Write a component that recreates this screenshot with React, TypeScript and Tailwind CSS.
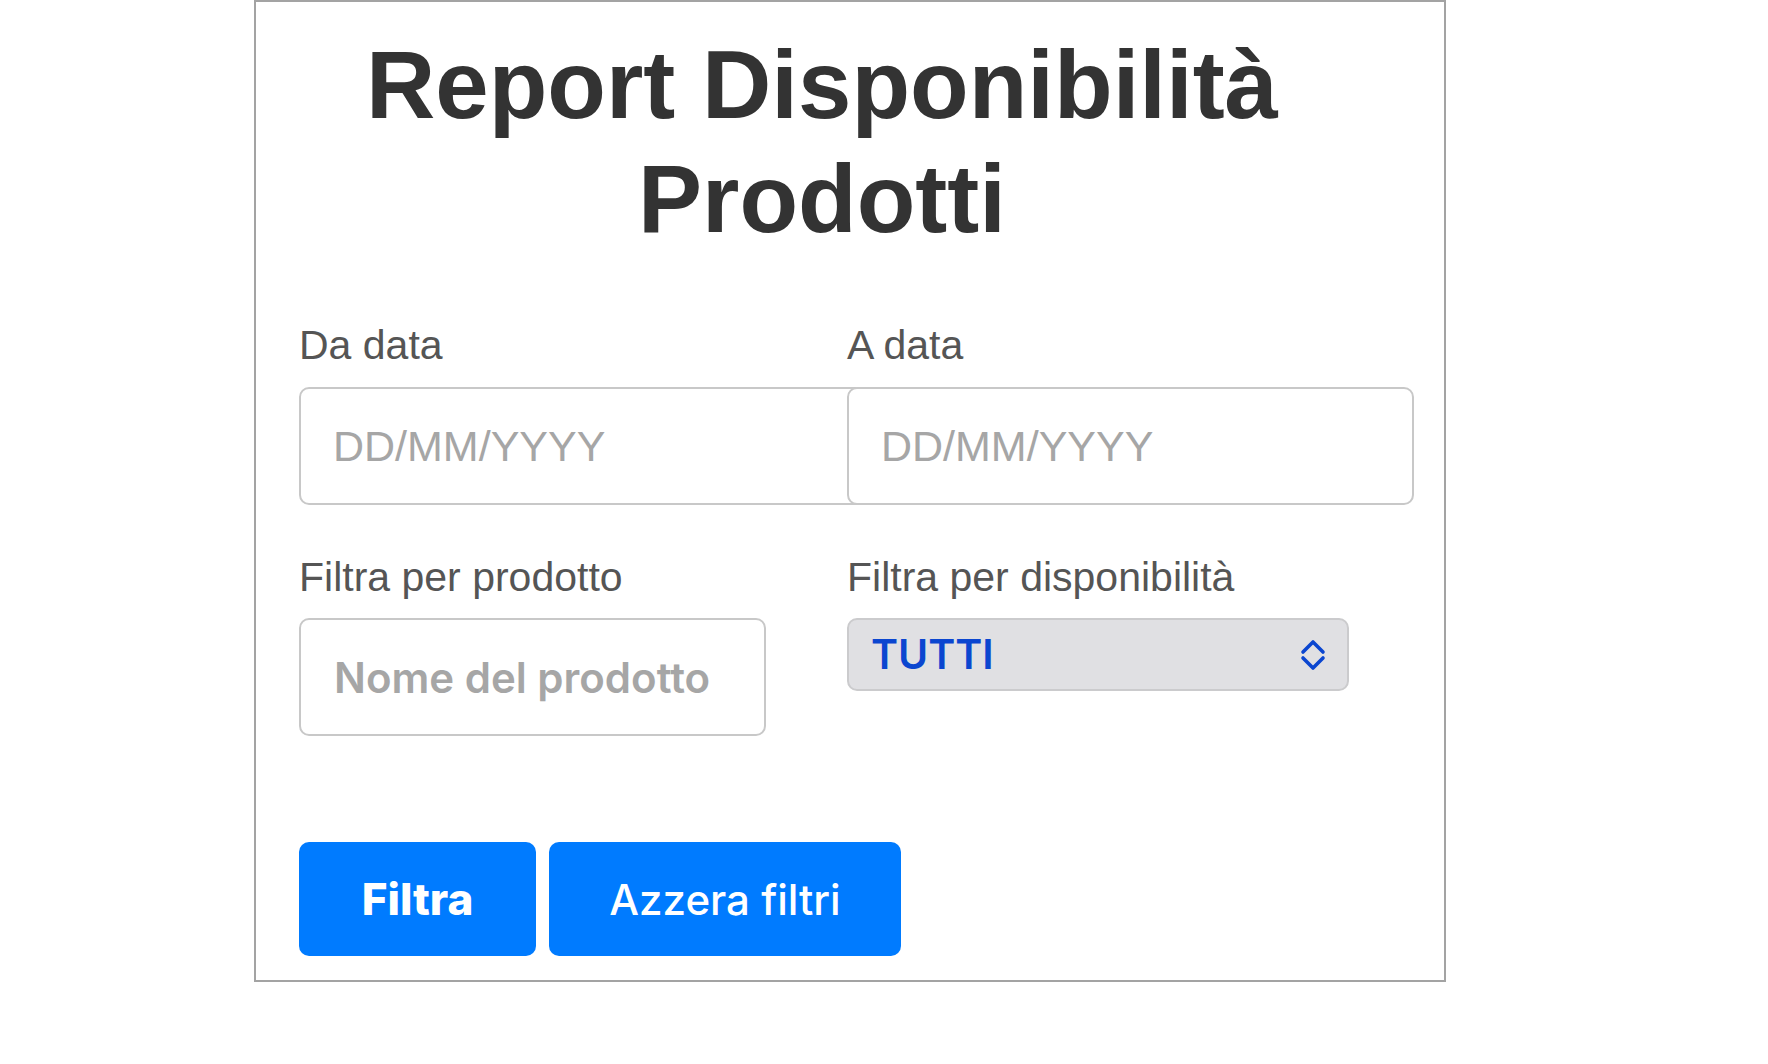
import { useState } from "react";

const ChevronUpDown = () => (
    <svg width="28" height="32" viewBox="0 0 28 32" fill="none" stroke="currentColor" strokeWidth="3.6" strokeLinecap="round" strokeLinejoin="round">
        <path d="M4 13 L14 3 L24 13" />
        <path d="M4 19 L14 29 L24 19" />
    </svg>
);

const App = () => {
    const [fromDate, setFromDate] = useState("");
    const [toDate, setToDate] = useState("");
    const [product, setProduct] = useState("");

    // reset everything back to the default state
    const handleReset = () => {
        setFromDate("");
        setToDate("");
        setProduct("");
    };

    return (
        <div className="min-h-screen bg-white font-['Liberation_Sans',Arial,sans-serif]">
            <div className="ml-[254px] w-[1192px] border-2 border-[#a3a3a3] pl-[43px] pr-[49px] pb-[24px]">
                <h1 className="mt-[26px] pr-[50px] text-center text-[96px] leading-[114px] font-bold text-[#333333]">
                    Report Disponibilità Prodotti
                </h1>

                <div className="mt-[66px] grid grid-cols-2 gap-y-[49px]">
                    <div className="flex flex-col">
                        <label className="text-[41px] leading-[47px] text-[#555555]">Da data</label>
                        <input
                            value={fromDate}
                            onChange={(e) => setFromDate(e.target.value)}
                            placeholder="DD/MM/YYYY"
                            className="mt-[18px] h-[118px] w-[567px] rounded-[10px] border-2 border-[#c8c8c8] bg-white px-[32px] text-[43px] text-[#333333] outline-none placeholder:text-[#a6a6a6]"
                        />
                    </div>
                    <div className="flex flex-col">
                        <label className="text-[41px] leading-[47px] text-[#555555]">A data</label>
                        <input
                            value={toDate}
                            onChange={(e) => setToDate(e.target.value)}
                            placeholder="DD/MM/YYYY"
                            className="mt-[18px] h-[118px] w-[567px] rounded-[10px] border-2 border-[#c8c8c8] bg-white px-[32px] text-[43px] text-[#333333] outline-none placeholder:text-[#a6a6a6]"
                        />
                    </div>

                    <div className="flex flex-col">
                        <label className="text-[41px] leading-[47px] text-[#555555]">Filtra per prodotto</label>
                        <input
                            value={product}
                            onChange={(e) => setProduct(e.target.value)}
                            placeholder="Nome del prodotto"
                            className="mt-[17px] h-[118px] w-[467px] rounded-[10px] border-2 border-[#c8c8c8] bg-white px-[33px] font-['Inter',sans-serif] text-[42px] font-semibold text-[#333333] outline-none placeholder:text-[#a6a6a6]"
                        />
                    </div>
                    <div className="flex flex-col items-start">
                        <label className="text-[41px] leading-[47px] text-[#555555]">Filtra per disponibilità</label>
                        <div className="mt-[17px] flex h-[73px] w-[502px] items-center justify-between rounded-[10px] border-2 border-[#cbcbcd] bg-[#e0e0e3] pl-[22px] pr-[20px] text-[#0b46d0]">
                            <span className="font-['Inter',sans-serif] text-[41px] font-semibold">TUTTI</span>
                            <ChevronUpDown />
                        </div>
                    </div>
                </div>

                <div className="mt-[106px] flex gap-[13px]">
                    <button className="h-[114px] w-[237px] rounded-[10px] bg-[#007bff] font-['Inter',sans-serif] text-[44px] font-extrabold text-white">
                        Filtra
                    </button>
                    <button
                        onClick={handleReset}
                        className="h-[114px] w-[352px] rounded-[10px] bg-[#007bff] font-['Inter',sans-serif] text-[42px] font-medium text-white"
                    >
                        Azzera filtri
                    </button>
                </div>
            </div>
        </div>
    );
};

export default App;
